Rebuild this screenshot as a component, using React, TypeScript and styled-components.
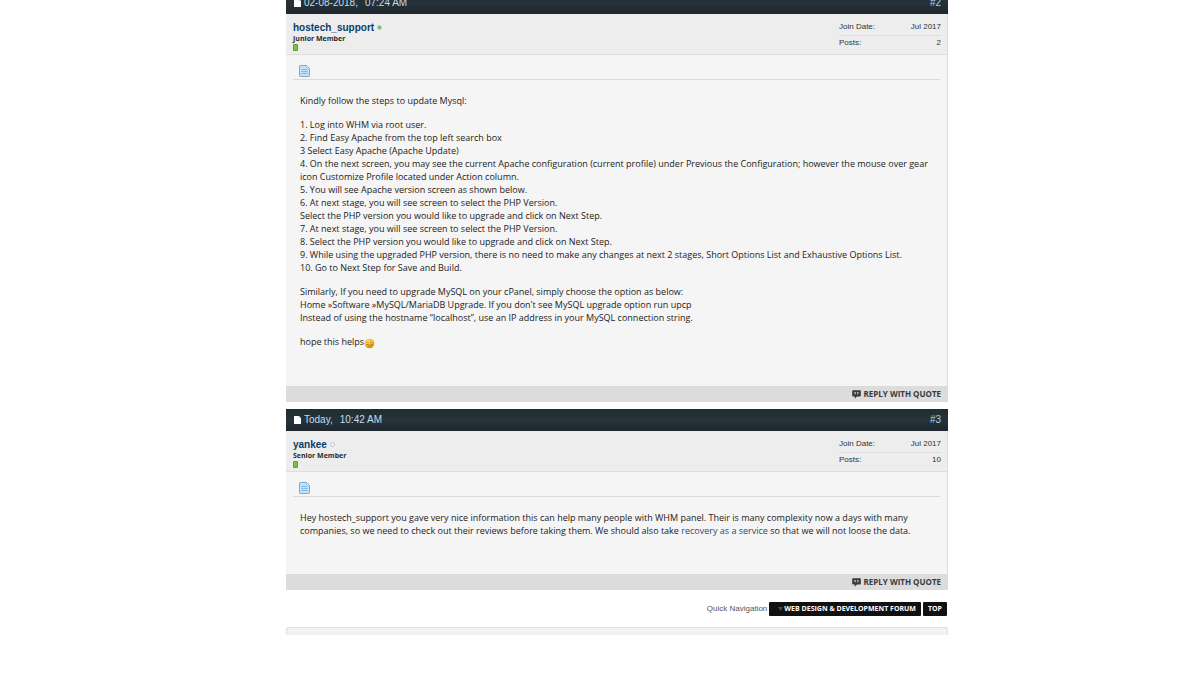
import React from "react";
import styled, { createGlobalStyle } from "styled-components";

const sans = `"Liberation Sans", Arial, sans-serif`;
const humanist = `"Open Sans", "Noto Sans", sans-serif`;

const GlobalStyle = createGlobalStyle`
  * { box-sizing: border-box; }
  body { margin: 0; background: #fff; color: #333; font-family: ${sans}; }
  a { color: inherit; text-decoration: none; }
  p, dl, dd, ol { margin: 0; padding: 0; }
`;

const Page = styled.div`
  display: grid;
  grid-template-columns: 286fr 662fr 252fr;
  margin-top: -8px;
`;

const Thread = styled.main`
  grid-column: 2;
  min-width: 0;
`;

const PostList = styled.ol`
  display: flex;
  flex-direction: column;
  gap: 7px;
  list-style: none;
`;

const PostItem = styled.li`
  border-right: 1px solid #dcdcdc;
  background: #f5f5f5;
`;

const PostHead = styled.div`
  display: flex;
  align-items: center;
  justify-content: space-between;
  height: 22px;
  margin-right: -1px;
  padding: 0 7px 0 8px;
  background: linear-gradient(#212c33, #26333a 50%, #1d272d);
  color: #c6dbe8;
  font-size: 10px;
  line-height: 12px;
`;

const PostDate = styled.span`
  display: flex;
  align-items: center;
  gap: 3px;
`;

const PostTime = styled.span`
  margin-left: 4px;
`;

const PostNumber = styled.a`
  color: #a9d0ea;
`;

const UserBar = styled.div`
  display: flex;
  justify-content: space-between;
  height: 41px;
  padding: 6px 6px 0 7px;
  border-bottom: 1px solid #dedede;
  background: #ededed;
`;

const UserName = styled.div`
  display: flex;
  align-items: center;
  gap: 3px;
  color: #0b3d6b;
  font-size: 10px;
  line-height: 15px;
  font-weight: bold;
`;

const UserTitle = styled.div`
  color: #2b2b2b;
  font-family: ${humanist};
  font-size: 7px;
  line-height: 8px;
  font-weight: bold;
`;

const Status = styled.span<{ $online: boolean }>`
  width: 5px;
  height: 5px;
  border-radius: 50%;
  border: 1px solid ${(p) => (p.$online ? "#a9dba6" : "#c4c4c4")};
  background: ${(p) => (p.$online ? "#6cc06a" : "#f4f4f4")};
`;

const Reputation = styled.div`
  width: 5px;
  height: 7px;
  margin-top: 1px;
  border: 1px solid #5c9d2c;
  border-radius: 1px;
  background: #7cc142;
`;

const Stats = styled.dl`
  width: 102px;
  font-size: 8px;
  line-height: 14px;
`;

const Stat = styled.div`
  display: flex;
  justify-content: space-between;
  height: 15px;
  & + & { border-top: 1px solid #e0e0e0; }
`;

const Body = styled.div`
  padding: 0 7px 37px;
`;

const TitleRow = styled.div`
  display: flex;
  align-items: flex-end;
  height: 25px;
  padding: 0 6px 2px;
  border-bottom: 1px solid #dadada;
`;

const Message = styled.div`
  display: flex;
  flex-direction: column;
  gap: 11px;
  padding: 14px 7px 0;
  color: #222;
  font-family: ${humanist};
  font-size: 9px;
  line-height: 13px;
`;

const InlineLink = styled.a`
  color: #1c4d78;
`;

const PostFoot = styled.div`
  display: flex;
  justify-content: flex-end;
  align-items: center;
  height: 16px;
  margin-right: -1px;
  padding-right: 7px;
  background: #dcdcdc;
`;

const ReplyLink = styled.a`
  display: flex;
  align-items: center;
  gap: 3px;
  color: #3a3a3a;
  font-family: ${humanist};
  font-size: 8px;
  line-height: 10px;
  font-weight: bold;
`;

const Navigation = styled.nav`
  display: flex;
  justify-content: flex-end;
  align-items: center;
  gap: 2px;
  margin: 12px 1px 11px 0;
  color: #555;
  font-size: 8px;
  line-height: 14px;
`;

const NavButton = styled.a`
  display: flex;
  align-items: center;
  gap: 1px;
  height: 14px;
  padding: 0 5px;
  border-radius: 1px;
  background: #111;
  color: #fff;
  font-family: ${humanist};
  font-size: 7px;
  font-weight: bold;
`;

const ForumButton = styled(NavButton)`
  padding-left: 9px;
`;

const Panel = styled.div`
  height: 8px;
  border: 1px solid #dedede;
  border-bottom: 0;
  border-radius: 3px 3px 0 0;
  background: #f2f2f2;
`;

const Smile = styled.svg`
  vertical-align: -4px;
`;

const PageIcon = () => (
  <svg width="7" height="8" viewBox="0 0 7 8" aria-hidden="true">
    <path d="M0 0h5l2 2v6H0z" fill="#fff" />
    <path d="M5 0v2h2" fill="none" stroke="#b9c2c7" strokeWidth="0.6" />
  </svg>
);

const DocumentIcon = () => (
  <svg width="11" height="12" viewBox="0 0 11 12" aria-hidden="true">
    <path d="M1.200 .5h6.300l3 3v7.300q0 .7-.7.7H1.200q-.7 0-.7-.7V1.200q0-.7.7-.7z" fill="#c3e2f8" stroke="#7fa9cb" />
    <path d="M7.300 1v2.700H10" fill="#eef7fd" stroke="#8db8da" strokeWidth="0.6" />
    <path d="M2.300 4.500h5.400M2.300 6.500h6.400M2.300 8.500h6.400" stroke="#7fbcec" strokeWidth="1" />
  </svg>
);

const QuoteIcon = () => (
  <svg width="9" height="9" viewBox="0 0 9 9" aria-hidden="true">
    <path d="M1 .3h7q.8 0 .8.8v4.600q0 .8-.8.8H4.900L2.800 8.700V6.500H1q-.8 0-.8-.8V1.100Q.2.3 1 .3z" fill="#3a3a3a" />
    <path d="M2.300 2h1.600v1.600l-.8 1h-.7l.4-1h-.5zM5 2h1.600v1.600l-.8 1h-.7l.4-1H5z" fill="#b5b5b5" />
  </svg>
);

const SmileIcon = () => (
  <Smile width="11" height="11" viewBox="0 0 11 11" role="img" aria-label="Smile">
    <defs>
      <radialGradient id="face" cx="40%" cy="30%" r="70%">
        <stop offset="0" stopColor="#ffe070" />
        <stop offset="0.6" stopColor="#f0b42a" />
        <stop offset="1" stopColor="#c98a1c" />
      </radialGradient>
    </defs>
    <circle cx="5.500" cy="5.500" r="4.800" fill="url(#face)" />
    <path d="M4 3.800v1M7 3.800v1M3 6.300q2.500 2.600 5 0" fill="none" stroke="#8a5a10" strokeWidth="0.8" />
  </Smile>
);

type PostProps = {
  date: string;
  time: string;
  number: string;
  user: string;
  title: string;
  online: boolean;
  posts: string;
  children: React.ReactNode;
};

const Post = ({ date, time, number, user, title, online, posts, children }: PostProps) => (
  <PostItem>
    <PostHead>
      <PostDate>
        <PageIcon />
        <span>{date},</span>
        <PostTime>{time}</PostTime>
      </PostDate>
      <PostNumber href="#">{number}</PostNumber>
    </PostHead>
    <UserBar>
      <div>
        <UserName>
          <a href="#">{user}</a>
          <Status $online={online} />
        </UserName>
        <UserTitle>{title}</UserTitle>
        <Reputation />
      </div>
      <Stats>
        <Stat>
          <dt>Join Date:</dt>
          <dd>Jul 2017</dd>
        </Stat>
        <Stat>
          <dt>Posts:</dt>
          <dd>{posts}</dd>
        </Stat>
      </Stats>
    </UserBar>
    <Body>
      <TitleRow>
        <DocumentIcon />
      </TitleRow>
      <Message>{children}</Message>
    </Body>
    <PostFoot>
      <ReplyLink href="#">
        <QuoteIcon />
        REPLY WITH QUOTE
      </ReplyLink>
    </PostFoot>
  </PostItem>
);

const steps = [
  "1. Log into WHM via root user.",
  "2. Find Easy Apache from the top left search box",
  "3 Select Easy Apache (Apache Update)",
  "4. On the next screen, you may see the current Apache configuration (current profile) under Previous the Configuration; however the mouse over gear icon Customize Profile located under Action column.",
  "5. You will see Apache version screen as shown below.",
  "6. At next stage, you will see screen to select the PHP Version.",
  "Select the PHP version you would like to upgrade and click on Next Step.",
  "7. At next stage, you will see screen to select the PHP Version.",
  "8. Select the PHP version you would like to upgrade and click on Next Step.",
  "9. While using the upgraded PHP version, there is no need to make any changes at next 2 stages, Short Options List and Exhaustive Options List.",
  "10. Go to Next Step for Save and Build.",
];

export default function App() {
  return (
    <>
      <GlobalStyle />
      <Page>
        <Thread>
          <PostList>
            <Post date="02-08-2018" time="07:24 AM" number="#2" user="hostech_support" title="Junior Member" online posts="2">
              <p>Kindly follow the steps to update Mysql:</p>
              <div>
                {steps.map((step, i) => (
                  <p key={i}>{step}</p>
                ))}
              </div>
              <div>
                <p>Similarly, If you need to upgrade MySQL on your cPanel, simply choose the option as below:</p>
                <p>Home »Software »MySQL/MariaDB Upgrade. If you don't see MySQL upgrade option run upcp</p>
                <p>Instead of using the hostname “localhost”, use an IP address in your MySQL connection string.</p>
              </div>
              <p>
                hope this helps
                <SmileIcon />
              </p>
            </Post>
            <Post date="Today" time="10:42 AM" number="#3" user="yankee" title="Senior Member" online={false} posts="10">
              <p>
                Hey hostech_support you gave very nice information this can help many people with WHM panel. Their is many
                complexity now a days with many companies, so we need to check out their reviews before taking them. We
                should also take <InlineLink href="#">recovery as a service</InlineLink> so that we will not loose the data.
              </p>
            </Post>
          </PostList>
          <Navigation>
            <span>Quick Navigation</span>
            <ForumButton href="#">
              <svg width="5" height="4" viewBox="0 0 5 4" aria-hidden="true">
                <path d="M0 0h5L2.500 4z" fill="#4a4a4a" />
              </svg>
              WEB DESIGN &amp; DEVELOPMENT FORUM
            </ForumButton>
            <NavButton href="#">TOP</NavButton>
          </Navigation>
          <Panel />
        </Thread>
      </Page>
    </>
  );
}
